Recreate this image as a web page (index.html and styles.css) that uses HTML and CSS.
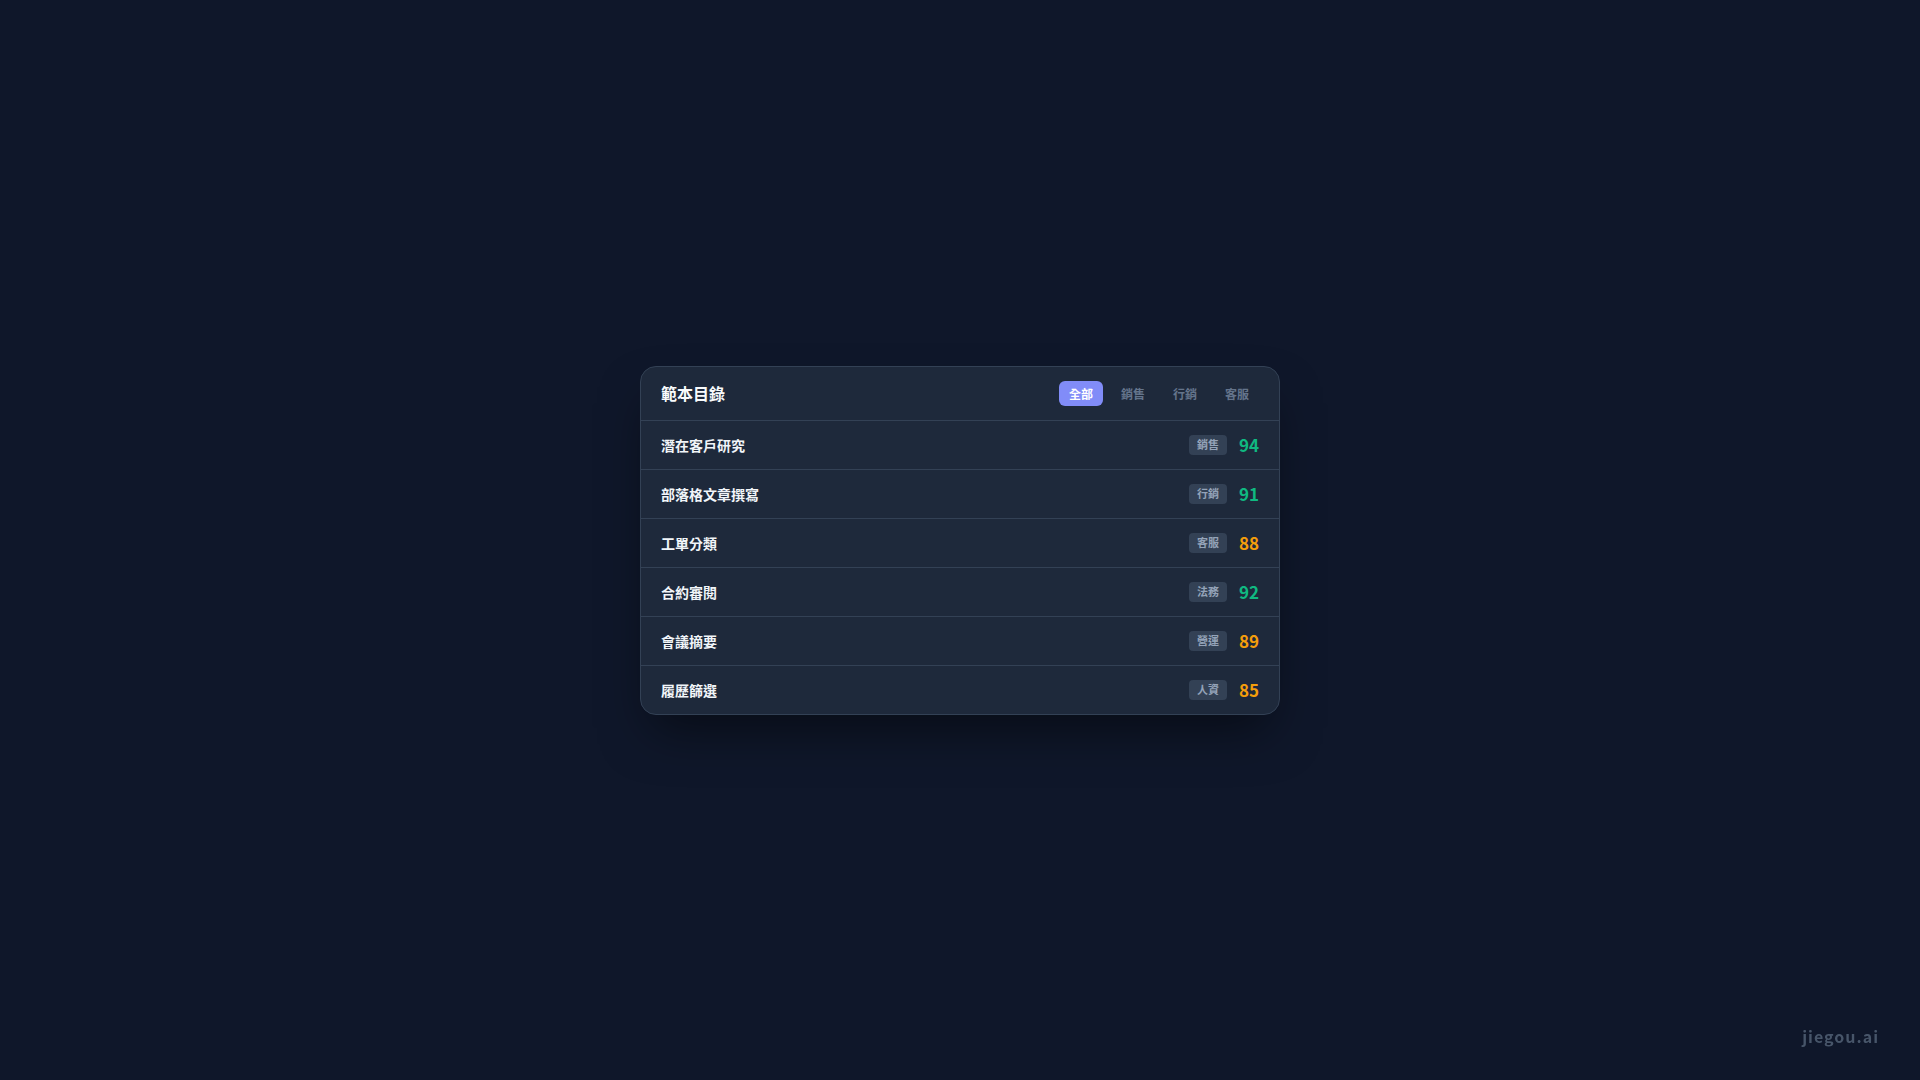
FILE: index.html
```html
<!DOCTYPE html>
<html lang="zh-Hant">
<head>
<meta charset="utf-8">
<title>範本目錄</title>
<link rel="stylesheet" href="styles.css">
</head>
<body>
<main class="stage">
  <section class="card">
    <header class="card-head">
      <h1 class="title">範本目錄</h1>
      <nav class="tabs">
        <span class="tab active">全部</span>
        <span class="tab">銷售</span>
        <span class="tab">行銷</span>
        <span class="tab">客服</span>
      </nav>
    </header>
    <ul class="list">
      <li class="row"><span class="name">潛在客戶研究</span><span class="meta"><span class="badge">銷售</span><span class="score high">94</span></span></li>
      <li class="row"><span class="name">部落格文章撰寫</span><span class="meta"><span class="badge">行銷</span><span class="score high">91</span></span></li>
      <li class="row"><span class="name">工單分類</span><span class="meta"><span class="badge">客服</span><span class="score mid">88</span></span></li>
      <li class="row"><span class="name">合約審閱</span><span class="meta"><span class="badge">法務</span><span class="score high">92</span></span></li>
      <li class="row"><span class="name">會議摘要</span><span class="meta"><span class="badge">營運</span><span class="score mid">89</span></span></li>
      <li class="row"><span class="name">履歷篩選</span><span class="meta"><span class="badge">人資</span><span class="score mid">85</span></span></li>
    </ul>
  </section>
</main>
<div class="watermark">jiegou.ai</div>
</body>
</html>
```

FILE: styles.css
```css
* { box-sizing: border-box; }
html, body {
  margin: 0;
  padding: 0;
  width: 100%;
  height: 100%;
}
body {
  background: #0f172a;
  font-family: "Noto Sans CJK TC", "Noto Sans", sans-serif;
  color: #f1f5f9;
  overflow: hidden;
}
.stage {
  height: 100vh;
  display: flex;
  align-items: center;
  justify-content: center;
}
.card {
  width: 640px;
  background: #1e293b;
  border: 1px solid #334155;
  border-radius: 16px;
  box-shadow: 0 25px 50px -12px rgba(0, 0, 0, 0.5);
  overflow: hidden;
}
.card-head {
  height: 54px;
  padding: 0 20px;
  display: flex;
  align-items: center;
  justify-content: space-between;
  border-bottom: 1px solid #334155;
}
.title {
  margin: 0;
  font-size: 16px;
  font-weight: 700;
  color: #f8fafc;
  line-height: 1;
}
.tabs {
  display: flex;
  gap: 8px;
}
.tab {
  height: 25px;
  padding: 1px 10px 0;
  border-radius: 6px;
  font-size: 12px;
  font-weight: 700;
  color: #64748b;
  display: flex;
  align-items: center;
  line-height: 1;
}
.tab.active {
  background: #818cf8;
  color: #ffffff;
}
.list {
  list-style: none;
  margin: 0;
  padding: 0;
}
.row {
  height: 49px;
  padding: 0 20px;
  display: flex;
  align-items: center;
  justify-content: space-between;
  border-top: 1px solid #334155;
}
.row:first-child { border-top: none; height: 48px; }
.name {
  font-size: 14px;
  font-weight: 700;
  color: #f1f5f9;
}
.meta {
  display: flex;
  align-items: center;
  gap: 12px;
}
.badge {
  height: 20px;
  padding: 0 8px;
  border-radius: 4px;
  background: #334155;
  color: #94a3b8;
  font-size: 11px;
  font-weight: 700;
  display: flex;
  align-items: center;
  line-height: 1;
}
.score {
  font-size: 17px;
  font-weight: 700;
  min-width: 19px;
  text-align: right;
  line-height: 1;
}
.score.high { color: #10b981; }
.score.mid { color: #f59e0b; }
.watermark {
  position: fixed;
  right: 41px;
  bottom: 36px;
  font-size: 16px;
  font-weight: 700;
  color: #475569;
  letter-spacing: 1px;
  line-height: 1;
}
```
